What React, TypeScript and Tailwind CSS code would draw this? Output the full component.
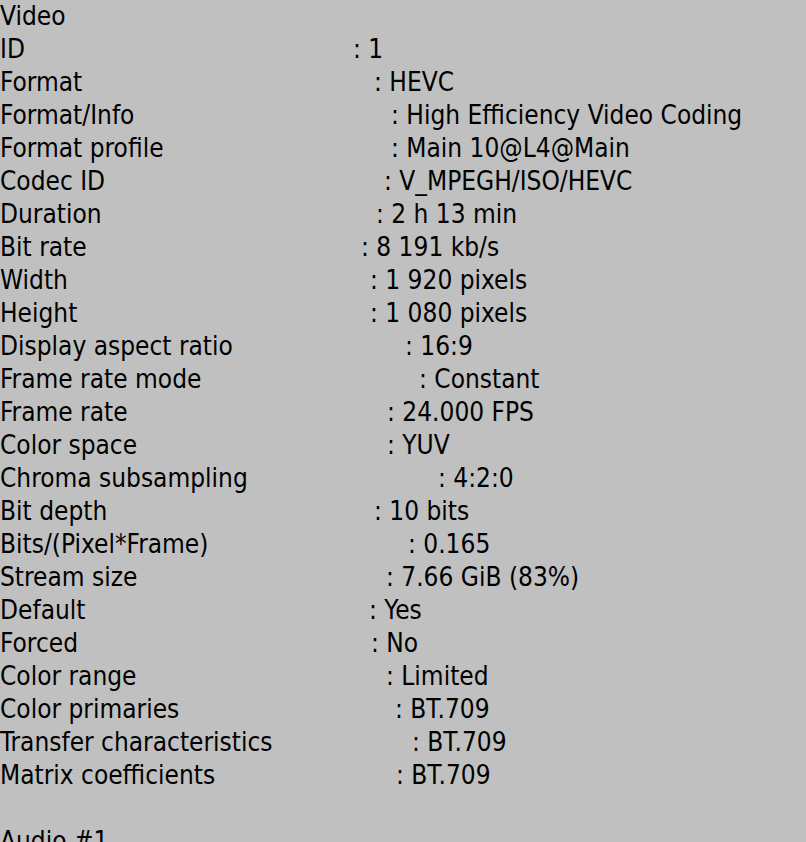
const rows: { label: string; value: string; w: string }[] = [
  { label: 'ID', value: '1', w: 'w-[353px]' },
  { label: 'Format', value: 'HEVC', w: 'w-[374px]' },
  { label: 'Format/Info', value: 'High Efficiency Video Coding', w: 'w-[391px]' },
  { label: 'Format profile', value: 'Main 10@L4@Main', w: 'w-[391px]' },
  { label: 'Codec ID', value: 'V_MPEGH/ISO/HEVC', w: 'w-[384px]' },
  { label: 'Duration', value: '2 h 13 min', w: 'w-[376px]' },
  { label: 'Bit rate', value: '8 191 kb/s', w: 'w-[361px]' },
  { label: 'Width', value: '1 920 pixels', w: 'w-[370px]' },
  { label: 'Height', value: '1 080 pixels', w: 'w-[370px]' },
  { label: 'Display aspect ratio', value: '16:9', w: 'w-[405px]' },
  { label: 'Frame rate mode', value: 'Constant', w: 'w-[419px]' },
  { label: 'Frame rate', value: '24.000 FPS', w: 'w-[387px]' },
  { label: 'Color space', value: 'YUV', w: 'w-[387px]' },
  { label: 'Chroma subsampling', value: '4:2:0', w: 'w-[438px]' },
  { label: 'Bit depth', value: '10 bits', w: 'w-[374px]' },
  { label: 'Bits/(Pixel*Frame)', value: '0.165', w: 'w-[408px]' },
  { label: 'Stream size', value: '7.66 GiB (83%)', w: 'w-[386px]' },
  { label: 'Default', value: 'Yes', w: 'w-[369px]' },
  { label: 'Forced', value: 'No', w: 'w-[371px]' },
  { label: 'Color range', value: 'Limited', w: 'w-[386px]' },
  { label: 'Color primaries', value: 'BT.709', w: 'w-[395px]' },
  { label: 'Transfer characteristics', value: 'BT.709', w: 'w-[412px]' },
  { label: 'Matrix coefficients', value: 'BT.709', w: 'w-[396px]' },
];

export default function App() {
  return (
    <div className="w-[806px] h-[842px] overflow-hidden bg-[#c0c0c0] text-black font-[Tahoma,'DejaVu_Sans_Condensed','DejaVu_Sans',sans-serif] [font-stretch:condensed] text-[26px] leading-[33px] whitespace-pre">
      <div>Video</div>
      {rows.map((r) => (
        <div key={r.label} className="flex">
          <span className={`${r.w} shrink-0`}>{r.label}</span>
          <span>: {r.value}</span>
        </div>
      ))}
      <div>&nbsp;</div>
      <div>Audio #1</div>
    </div>
  );
}
